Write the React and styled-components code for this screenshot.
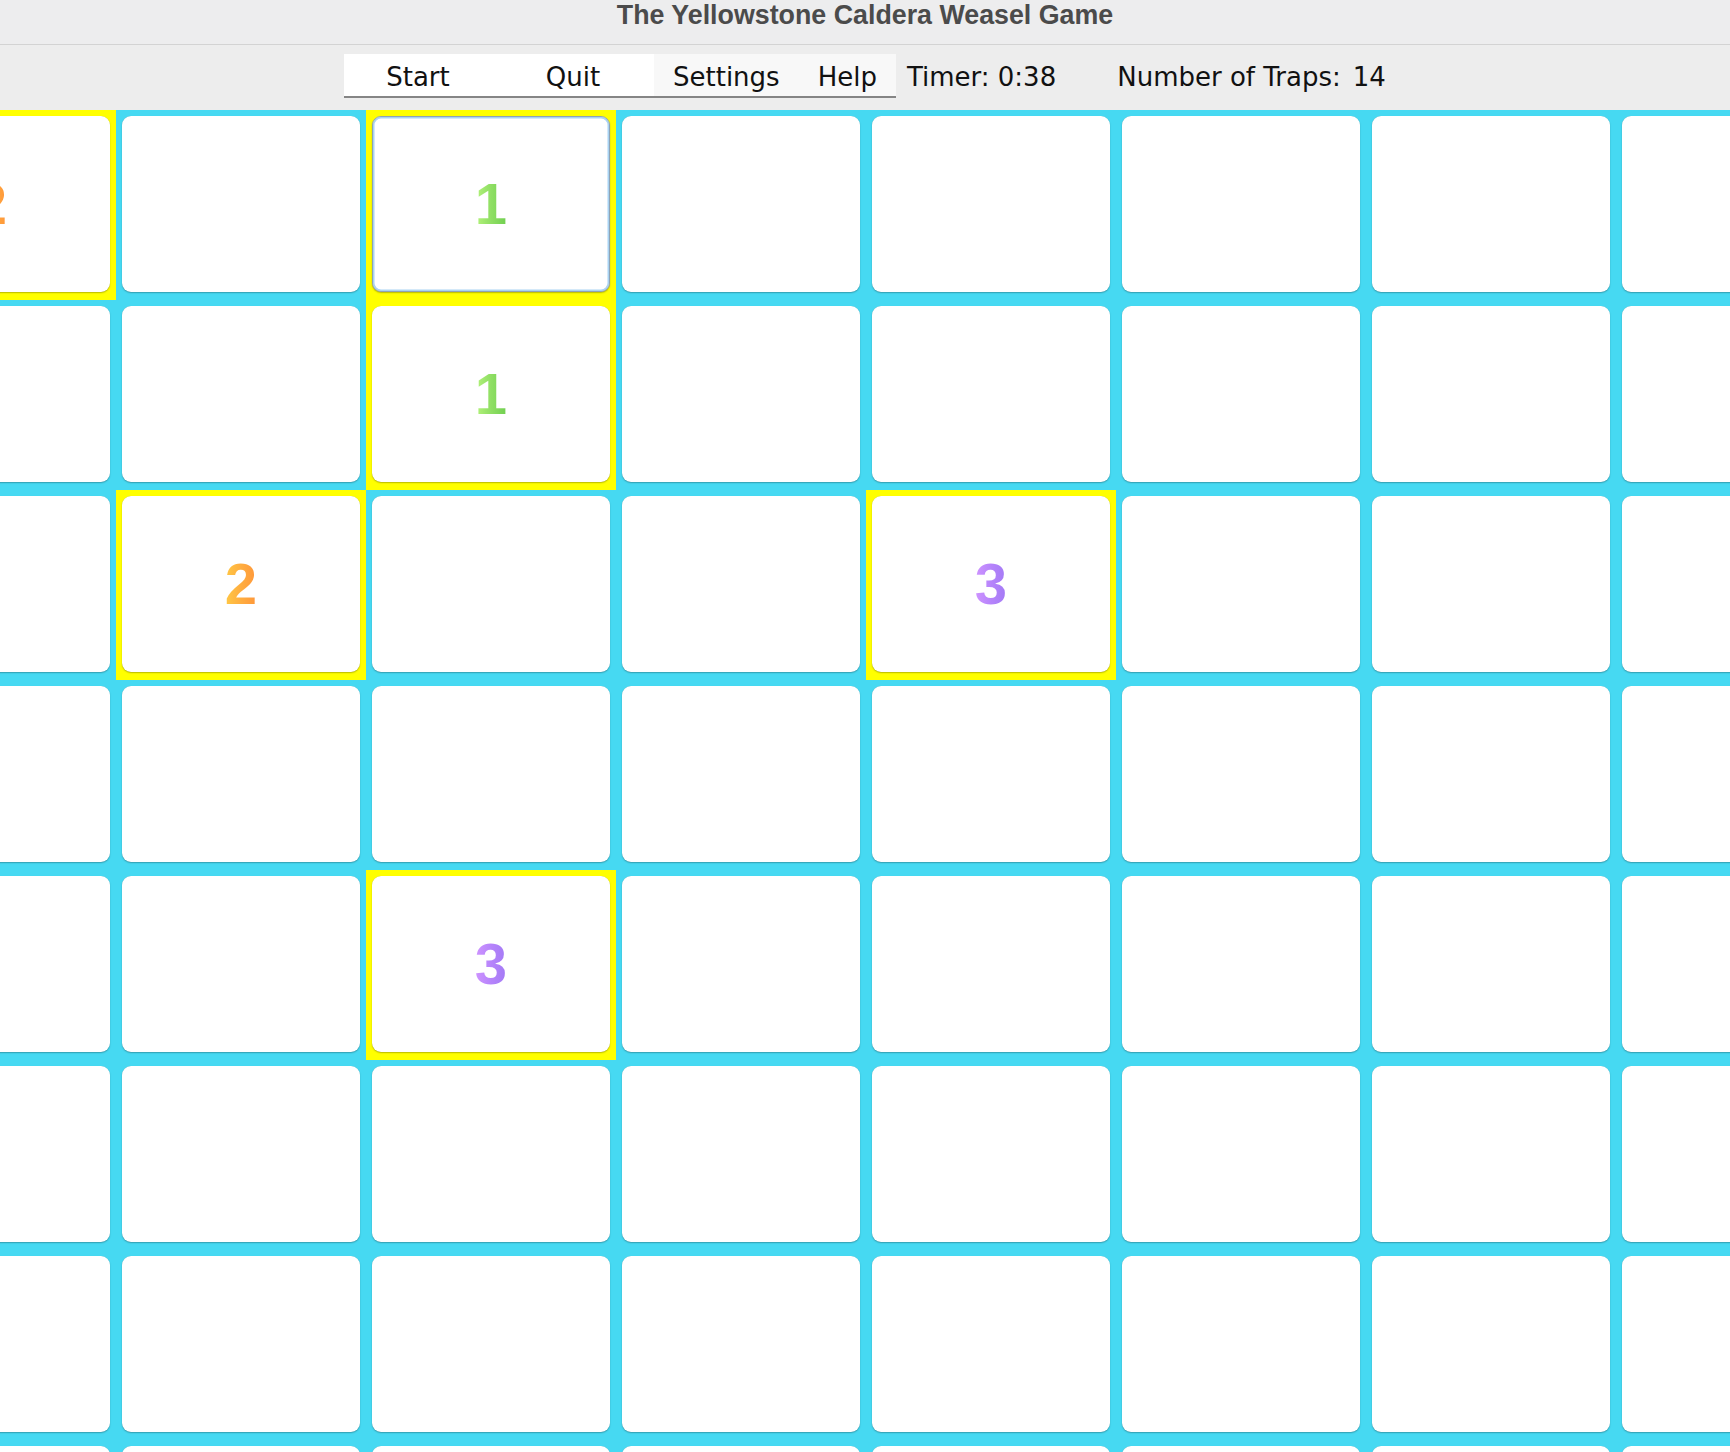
import styled, { createGlobalStyle } from "styled-components";

const GlobalStyle = createGlobalStyle`
  html, body {
    margin: 0;
    padding: 0;
    overflow: hidden;
    background: #ececec;
  }
`;

const COLS = 8;
const ROWS = 8;

// revealed tiles: row-col -> count of traps around
const revealed = {
  "0-0": 2,
  "0-2": 1,
  "1-2": 1,
  "2-1": 2,
  "2-4": 3,
  "4-2": 3,
};

const focusedKey = "0-2";

const digitColors = {
  1: "linear-gradient(90deg, #b6f47c 0%, #96e268 40%, #70cf50 100%)",
  2: "linear-gradient(90deg, #ffc845 0%, #ffb040 45%, #ff963a 100%)",
  3: "linear-gradient(90deg, #cf94ff 0%, #b684fb 50%, #a37af5 100%)",
};

const Window = styled.div`
  width: 1730px;
  height: 1452px;
  display: flex;
  flex-direction: column;
  overflow: hidden;
`;

const TitleBar = styled.div`
  height: 44px;
  flex: none;
  display: flex;
  align-items: flex-start;
  justify-content: center;
  background: #ededee;
  border-bottom: 1px solid #d3d3d3;
`;

const Title = styled.div`
  margin-top: 1px;
  font-family: "Liberation Sans", Arial, sans-serif;
  font-weight: 700;
  font-size: 26.8px;
  line-height: 28px;
  color: #4b4b4b;
`;

const ToolRow = styled.div`
  height: 65px;
  flex: none;
  display: flex;
  align-items: flex-start;
  padding: 9px 0 0 344px;
  box-sizing: border-box;
  background: #ededed;
  font-family: "DejaVu Sans", "Liberation Sans", sans-serif;
  font-size: 26px;
  color: #111;
`;

const MenuBar = styled.div`
  display: flex;
  height: 42px;
  background: #ffffff;
  border-bottom: 2px solid #858585;
`;

const MenuItem = styled.div`
  display: flex;
  align-items: center;
  box-sizing: border-box;
  justify-content: ${(p) => (p.$width ? "center" : "flex-start")};
  width: ${(p) => (p.$width ? `${p.$width}px` : "auto")};
  padding: ${(p) => (p.$width ? "3px 0 0" : "3px 19px 0")};
  background: ${(p) => (p.$shaded ? "#f8f8f8" : "#ffffff")};
  height: 100%;
`;

const Label = styled.div`
  height: 42px;
  box-sizing: border-box;
  padding-top: 3px;
  display: flex;
  align-items: center;
  margin-left: ${(p) => p.$gap}px;
  white-space: pre;
`;

const Board = styled.div`
  flex: 1;
  background: #46d9f2;
  overflow: hidden;
`;

const Grid = styled.div`
  display: grid;
  grid-template-columns: repeat(${COLS}, 250px);
  grid-auto-rows: 190px;
  margin-left: -134px;
`;

const Slot = styled.div`
  padding: 6px 6px 8px 6px;
  background: ${(p) => (p.$open ? "#ffff00" : "transparent")};
`;

const Tile = styled.div`
  height: 100%;
  box-sizing: border-box;
  background: #ffffff;
  border-radius: 9px;
  display: flex;
  align-items: center;
  justify-content: center;
  box-shadow: 0 1px 1.5px rgba(0, 0, 0, 0.28), 0 0 0.5px rgba(0, 0, 0, 0.2);
  border: ${(p) => (p.$focused ? "1px solid #8ea3b3" : "none")};
  ${(p) =>
    p.$focused &&
    `box-shadow: inset 0 0 0 1.5px #a9d3f3, 0 1px 1.5px rgba(0, 0, 0, 0.28);`}
`;

const Digit = styled.span`
  font-family: "Liberation Sans", Arial, sans-serif;
  font-weight: 700;
  font-size: 58px;
  line-height: 1;
  background: ${(p) => digitColors[p.$n]};
  -webkit-background-clip: text;
  background-clip: text;
  color: transparent;
`;

const App = () => {
  const cells = [];
  for (let r = 0; r < ROWS; r++) {
    for (let c = 0; c < COLS; c++) {
      const key = `${r}-${c}`;
      const n = revealed[key];
      cells.push(
        <Slot key={key} $open={!!n}>
          <Tile $focused={key === focusedKey}>
            {n && <Digit $n={n}>{n}</Digit>}
          </Tile>
        </Slot>
      );
    }
  }

  return (
    <Window>
      <GlobalStyle />
      <TitleBar>
        <Title>The Yellowstone Caldera Weasel Game</Title>
      </TitleBar>
      <ToolRow>
        <MenuBar>
          <MenuItem $width={148}>Start</MenuItem>
          <MenuItem $width={162}>Quit</MenuItem>
          <MenuItem $shaded>Settings</MenuItem>
          <MenuItem $shaded>Help</MenuItem>
        </MenuBar>
        <Label $gap={11}>Timer: 0:38</Label>
        <Label $gap={61}>Number of Traps:</Label>
        <Label $gap={12}>14</Label>
      </ToolRow>
      <Board>
        <Grid>{cells}</Grid>
      </Board>
    </Window>
  );
};

export default App;
